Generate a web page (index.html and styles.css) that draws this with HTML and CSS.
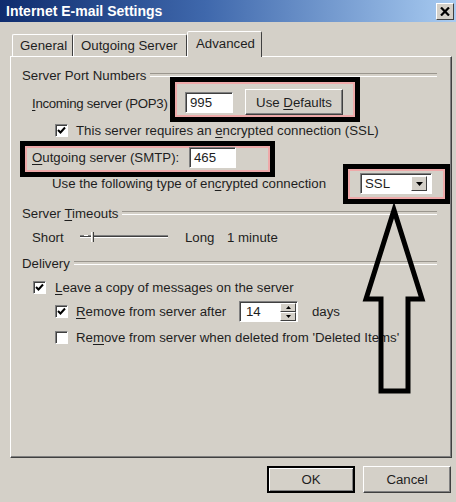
FILE: index.html
```html
<!DOCTYPE html>
<html lang="en">
<head>
    <meta charset="UTF-8">
    <title>Internet E-mail Settings</title>
    <link rel="stylesheet" href="styles.css">
</head>
<body>
    <div class="window">
        <div class="titlebar">
            <span class="title">Internet E-mail Settings</span>
            <span class="close">
                <svg width="10" height="9" viewBox="0 0 10 9"><path d="M1 0.5 L9 8.5 M9 0.5 L1 8.5" stroke="#000" stroke-width="2.2"/></svg>
            </span>
        </div>

        <div class="tabs">
            <span class="tab tab-general">General</span>
            <span class="tab tab-outgoing">Outgoing Server</span>
            <span class="tab tab-advanced active">Advanced</span>
        </div>

        <div class="panel">
            <div class="group-head row-ports"><span>Server Port Numbers</span></div>

            <div class="row row-incoming">
                <span class="lbl lbl-incoming"><u>I</u>ncoming server (POP3)</span>
                <span class="mark mark-incoming">
                    <span class="field port-in">995</span>
                    <button class="btn btn-defaults"><span>Use <u>D</u>efaults</span></button>
                </span>
            </div>

            <div class="row row-ssl">
                <span class="check"><svg width="9" height="9" viewBox="0 0 9 9"><path d="M1 4 L3.5 6.5 L8 1.5" fill="none" stroke="#000" stroke-width="2"/></svg></span>
                <span class="lbl">This server requires an <u>e</u>ncrypted connection (SSL)</span>
            </div>

            <div class="row row-outgoing">
                <span class="mark mark-outgoing">
                    <span class="lbl lbl-outgoing"><u>O</u>utgoing server (SMTP):</span>
                    <span class="field port-out">465</span>
                </span>
            </div>

            <div class="row row-enc">
                <span class="lbl lbl-enc">Use the following type of en<u>c</u>rypted connection</span>
                <span class="mark mark-enc">
                    <span class="field select">
                        <span class="select-text">SSL</span>
                        <span class="drop"><svg width="7" height="4" viewBox="0 0 7 4"><path d="M0 0 H7 L3.5 4 Z" fill="#000"/></svg></span>
                    </span>
                </span>
            </div>

            <div class="group-head row-timeouts"><span>Server <u>T</u>imeouts</span></div>

            <div class="row row-slider">
                <span class="lbl lbl-short">Short</span>
                <span class="slider">
                    <span class="track"></span>
                    <span class="tick"></span>
                    <span class="thumb"></span>
                </span>
                <span class="lbl lbl-long">Long</span>
                <span class="lbl">1 minute</span>
            </div>

            <div class="group-head row-delivery"><span>Delivery</span></div>

            <div class="row row-leave">
                <span class="check"><svg width="9" height="9" viewBox="0 0 9 9"><path d="M1 4 L3.5 6.5 L8 1.5" fill="none" stroke="#000" stroke-width="2"/></svg></span>
                <span class="lbl"><u>L</u>eave a copy of messages on the server</span>
            </div>

            <div class="row row-remove">
                <span class="check"><svg width="9" height="9" viewBox="0 0 9 9"><path d="M1 4 L3.5 6.5 L8 1.5" fill="none" stroke="#000" stroke-width="2"/></svg></span>
                <span class="lbl lbl-after"><u>R</u>emove from server after</span>
                <span class="spin">
                    <span class="field spin-text">14</span>
                    <span class="spin-btns">
                        <span class="spin-btn"><svg width="5" height="3" viewBox="0 0 5 3"><path d="M0 3 H5 L2.5 0 Z" fill="#000"/></svg></span>
                        <span class="spin-btn"><svg width="5" height="3" viewBox="0 0 5 3"><path d="M0 0 H5 L2.5 3 Z" fill="#000"/></svg></span>
                    </span>
                </span>
                <span class="lbl lbl-days">days</span>
            </div>

            <div class="row row-deleted">
                <span class="check"></span>
                <span class="lbl">Re<u>m</u>ove from server when deleted from 'Deleted Items'</span>
            </div>
        </div>

        <div class="footer">
            <button class="btn btn-ok">OK</button>
            <button class="btn btn-cancel">Cancel</button>
        </div>

        <!-- annotation arrow drawn over the dialog -->
        <svg class="arrow" width="456" height="502" viewBox="0 0 456 502">
            <polygon points="394,210 422,299 408,299 408,391 381,391 381,299 366,299" fill="none" stroke="#000" stroke-width="5" stroke-linejoin="miter"/>
        </svg>
    </div>
</body>
</html>
```

FILE: styles.css
```css
* {
    box-sizing: border-box;
}
body {
    margin: 0;
    background-color: #d4d0c8;
    font-family: 'Liberation Sans', Arial, sans-serif;
    font-size: 13.25px;
    color: #1e1e1e;
}
u {
    text-decoration-thickness: 1px;
    text-underline-offset: 2px;
}
.window {
    position: relative;
    width: 456px;
    height: 502px;
    overflow: hidden;
}

/* title bar */
.titlebar {
    height: 22px;
    display: flex;
    align-items: center;
    justify-content: space-between;
    padding: 0 2px 0 6px;
    background: linear-gradient(to right, #0f2c6e, #3f68ac 45%, #a8cbf1);
}
.title {
    color: #ffffff;
    font-weight: bold;
    font-size: 14px;
}
.close {
    width: 18px;
    height: 17px;
    display: flex;
    align-items: center;
    justify-content: center;
    background-color: #d4d0c8;
    border: 1px solid;
    border-color: #ffffff #404040 #404040 #ffffff;
}

/* tabs */
.tabs {
    height: 34px;
    display: flex;
    align-items: flex-end;
    padding-left: 12px;
}
.tab {
    height: 22px;
    display: flex;
    align-items: center;
    padding-left: 7px;
    white-space: nowrap;
    border: 1px solid;
    border-bottom: none;
    border-color: #ffffff #404040 transparent #ffffff;
    border-radius: 2px 2px 0 0;
}
.tab-general {
    width: 61px;
}
.tab-outgoing {
    width: 114px;
}
.tab.active {
    position: relative;
    z-index: 1;
    width: 75px;
    height: 26px;
    margin-bottom: -1px;
    padding-left: 8px;
    padding-bottom: 2px;
    background-color: #d4d0c8;
}

/* tab panel */
.panel {
    width: 442px;
    height: 402px;
    margin-left: 10px;
    padding: 8px 14px 0 11px;
    border: 1px solid;
    border-color: #ffffff #404040 #404040 #ffffff;
    box-shadow: inset -1px -1px 0 #808080;
}
.row {
    display: flex;
    align-items: center;
}
.row > *, .mark > * {
    flex-shrink: 0;
}
.lbl {
    white-space: nowrap;
}
.group-head {
    display: flex;
    align-items: center;
    gap: 4px;
    height: 20px;
    white-space: nowrap;
}
.group-head::after {
    content: "";
    flex: 1;
    height: 2px;
    border-top: 1px solid #9a968e;
    border-bottom: 1px solid #ffffff;
}

/* red/black annotation boxes */
.mark {
    display: inline-flex;
    align-items: center;
    border: 5px solid #000000;
    box-shadow: inset 0 0 0 2px #eea9a9;
}

.row-incoming {
    height: 36px;
    padding-left: 10px;
}
.lbl-incoming {
    width: 138px;
    letter-spacing: -0.3px;
}
.mark-incoming {
    padding: 7px 12px 2px 10px;
    gap: 12px;
    margin-bottom: 7px;
}
.port-in {
    width: 48px;
}
.btn-defaults {
    width: 98px;
    height: 26px;
}

.row-ssl {
    height: 18px;
    padding-left: 33px;
    gap: 8px;
}

.row-outgoing {
    height: 32px;
}
.mark-outgoing {
    margin-left: -2px;
    margin-top: 7px;
    padding: 1px 34px 4px 7px;
}
.lbl-outgoing {
    width: 157px;
}
.port-out {
    width: 47px;
}

.row-enc {
    height: 24px;
    padding-left: 30px;
}
.lbl-enc {
    width: 291px;
}
.mark-enc {
    padding: 4px 13px 5px 12px;
    margin-top: 2px;
}
.select {
    width: 72px;
    height: 19px;
    padding: 0 2px 0 4px;
    justify-content: space-between;
}
.drop {
    width: 16px;
    height: 15px;
    display: flex;
    align-items: center;
    justify-content: center;
    background-color: #d4d0c8;
    border: 1px solid;
    border-color: #ffffff #404040 #404040 #ffffff;
}

.row-timeouts {
    margin-top: 8px;
}
.row-slider {
    height: 28px;
    padding-left: 10px;
}
.lbl-short {
    width: 48px;
}
.slider {
    position: relative;
    width: 88px;
    height: 12px;
    margin-right: 17px;
}
.track {
    position: absolute;
    left: 0;
    right: 0;
    top: 4px;
    height: 3px;
    border-top: 1px solid #808080;
    border-bottom: 1px solid #ffffff;
    background-color: #404040;
}
.tick {
    position: absolute;
    left: 4px;
    top: 4px;
    width: 4px;
    height: 1px;
    background-color: #ffffff;
}
.thumb {
    position: absolute;
    left: 11px;
    top: 1px;
    width: 3px;
    height: 10px;
    background-color: #d4d0c8;
    border-left: 1px solid #ffffff;
    border-right: 1px solid #404040;
}
.lbl-long {
    width: 42px;
}

.row-delivery {
    height: 24px;
}
.row-leave {
    height: 24px;
    padding-left: 11px;
    gap: 9px;
}
.row-remove {
    height: 24px;
    padding-left: 33px;
    gap: 8px;
}
.lbl-after {
    width: 155px;
}
.lbl-days {
    margin-left: 6px;
}
.row-deleted {
    height: 28px;
    padding-left: 33px;
    gap: 8px;
}

/* controls */
.field {
    display: flex;
    align-items: center;
    height: 21px;
    padding: 0 4px;
    background-color: #ffffff;
    border: 1px solid;
    border-color: #808080 #ffffff #ffffff #808080;
    box-shadow: inset 1px 1px 0 #404040;
}
.check {
    width: 13px;
    height: 13px;
    display: flex;
    align-items: center;
    justify-content: center;
    background-color: #ffffff;
    border: 1px solid;
    border-color: #808080 #ffffff #ffffff #808080;
    box-shadow: inset 1px 1px 0 #404040;
}
.btn {
    display: flex;
    align-items: center;
    justify-content: center;
    padding: 0;
    font-family: inherit;
    font-size: inherit;
    color: inherit;
    background-color: #d4d0c8;
    border: 1px solid;
    border-color: #ffffff #404040 #404040 #ffffff;
    box-shadow: inset -1px -1px 0 #808080;
}
.spin {
    display: flex;
    width: 59px;
    height: 21px;
    background-color: #ffffff;
    border: 1px solid;
    border-color: #808080 #ffffff #ffffff #808080;
    box-shadow: inset 1px 1px 0 #404040;
}
.spin-text {
    flex: 1;
    height: 100%;
    padding-left: 6px;
    border: none;
    box-shadow: none;
    background: transparent;
}
.spin-btns {
    display: flex;
    flex-direction: column;
    width: 17px;
    padding: 1px 1px 0 0;
}
.spin-btn {
    flex: 1;
    display: flex;
    align-items: center;
    justify-content: center;
    background-color: #d4d0c8;
    border: 1px solid;
    border-color: #ffffff #404040 #404040 #ffffff;
}

/* footer buttons */
.footer {
    display: flex;
    justify-content: flex-end;
    gap: 8px;
    padding: 8px 5px 0 0;
}
.btn-ok, .btn-cancel {
    width: 88px;
    height: 27px;
}
.btn-ok {
    border: 2px solid #000000;
    box-shadow: inset 1px 1px 0 #ffffff, inset -1px -1px 0 #808080;
}

.arrow {
    position: absolute;
    left: 0;
    top: 0;
    pointer-events: none;
}
```
